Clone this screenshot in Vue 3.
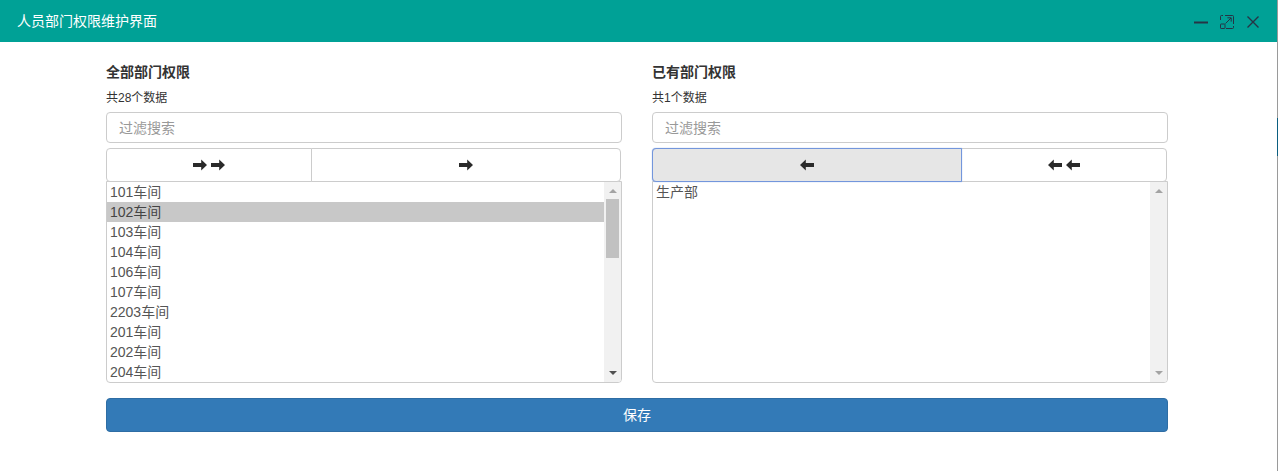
<script setup>
const panels = [
  {
    title: '全部部门权限',
    count: '共28个数据',
    items: ['101车间', '102车间', '103车间', '104车间', '106车间', '107车间', '2203车间', '201车间', '202车间', '204车间'],
    selected: '102车间',
    thumb: true,
    buttons: [
      { dir: 'right', n: 2 },
      { dir: 'right', n: 1 }
    ]
  },
  {
    title: '已有部门权限',
    count: '共1个数据',
    items: ['生产部'],
    selected: '',
    thumb: false,
    buttons: [
      { dir: 'left', n: 1, active: true },
      { dir: 'left', n: 2 }
    ]
  }
]
</script>

<template>
  <div class="page">
    <header class="bar">
      <span class="bar-title">人员部门权限维护界面</span>
      <div class="bar-icons">
        <svg width="16" height="16" viewBox="0 0 16 16"><path d="M1 8.5h14" stroke="#263445" stroke-width="2" fill="none" /></svg>
        <svg width="16" height="16" viewBox="0 0 16 16" fill="none" stroke="#263445" stroke-width="1"><path d="M6 1.5h7.5a1 1 0 0 1 1 1V10M1.5 6V2.5a1 1 0 0 1 1-1H4M14.5 12v1.5a1 1 0 0 1-1 1H7" /><rect x="1.5" y="10" width="4.5" height="4.5" rx=".6" /><path d="M6.5 9.5 12 4M8.4 3.8H12.2V7.6" /></svg>
        <svg width="16" height="16" viewBox="0 0 16 16"><path d="M2.5 2.5l11 11M13.5 2.5l-11 11" stroke="#263445" stroke-width="1.4" fill="none" /></svg>
      </div>
    </header>
    <main class="content">
      <div class="columns">
        <section v-for="p in panels" :key="p.title" class="panel">
          <h4 class="panel-title">{{ p.title }}</h4>
          <div class="panel-count">{{ p.count }}</div>
          <input class="filter" type="text" placeholder="过滤搜索" />
          <div class="btn-row">
            <button v-for="(b, i) in p.buttons" :key="i" class="move" :class="{ active: b.active }" type="button">
              <svg v-for="k in b.n" :key="k" class="arrow" :class="b.dir" width="14" height="12" viewBox="0 0 14 12"><path d="M0 4.1H8.2V0.6L14 6 8.2 11.4V7.9H0Z" fill="#2a2a2a" /></svg>
            </button>
          </div>
          <div class="list">
            <ul class="rows">
              <li v-for="it in p.items" :key="it" class="row" :class="{ selected: it === p.selected }">{{ it }}</li>
            </ul>
            <div class="scroll">
              <span class="tri up"></span>
              <div class="track"><div v-if="p.thumb" class="thumb"></div></div>
              <span class="tri down" :class="{ dim: !p.thumb }"></span>
            </div>
          </div>
        </section>
      </div>
      <button class="save" type="button">保存</button>
    </main>
    <div class="edge"><div class="edge-mark"></div></div>
  </div>
</template>

<style scoped>
.page {
  position: relative;
  width: 1278px;
  height: 471px;
  overflow: hidden;
  background: #fff;
  color: #333;
  font-family: "Liberation Sans", "Noto Sans CJK SC", sans-serif;
  font-size: 14px;
}
.edge {
  position: absolute;
  top: 0;
  right: 0;
  width: 1px;
  height: 471px;
  background: #9a9a9a;
}
.edge-mark {
  height: 38px;
  margin-top: 118px;
  background: #0b5f80;
}
.bar {
  height: 42px;
  background: #00a196;
  display: flex;
  align-items: center;
  justify-content: space-between;
  padding: 0 17px;
  box-sizing: border-box;
}
.bar-title {
  color: #fff;
  font-size: 14px;
  position: relative;
  top: -1px;
}
.bar-icons {
  display: flex;
  gap: 10px;
  margin-top: 1px;
}
.content {
  padding: 0 110px 0 106px;
}
.columns {
  display: flex;
  gap: 30px;
}
.panel {
  width: 516px;
}
.panel-title {
  margin: 22px 0 0;
  font-size: 14px;
  font-weight: 700;
  line-height: 16px;
  height: 16px;
}
.panel-count {
  margin-top: 10px;
  font-size: 12px;
  line-height: 17px;
  height: 17px;
}
.filter {
  display: block;
  box-sizing: border-box;
  width: 516px;
  height: 31px;
  margin-top: 5px;
  padding: 0 12px;
  border: 1px solid #ccc;
  border-radius: 4px;
  font: inherit;
  color: #555;
  outline: none;
}
.filter::placeholder {
  color: #999;
  opacity: 1;
}
.btn-row {
  display: flex;
  width: 515px;
  margin-top: 5px;
  height: 34px;
}
.move {
  flex: 1 1 0;
  display: flex;
  align-items: center;
  justify-content: center;
  gap: 4px;
  padding: 0;
  background: #fff;
  border: 1px solid #ccc;
  font: inherit;
}
.move:first-child {
  flex: 0 0 206px;
  border-radius: 4px 0 0 4px;
}
.move:last-child {
  margin-left: -1px;
  border-radius: 0 4px 4px 0;
}
.panel:last-child .move:first-child {
  flex: 0 0 310px;
}
.move.active {
  position: relative;
  z-index: 1;
  background: #e6e6e6;
  border-color: #7396dc;
  box-shadow: 0 0 1px #7396dc;
}
.arrow.left {
  transform: scaleX(-1);
}
.list {
  display: flex;
  box-sizing: border-box;
  width: 516px;
  height: 202px;
  margin-top: -1px;
  border: 1px solid #ccc;
  border-radius: 0 0 4px 4px;
  overflow: hidden;
}
.rows {
  flex: 1;
  margin: 0;
  padding: 0;
  list-style: none;
  overflow: hidden;
}
.row {
  height: 20px;
  line-height: 20px;
  padding-left: 3px;
  white-space: nowrap;
  color: #555;
}
.row.selected {
  background: #c8c8c8;
  color: #444;
}
.scroll {
  flex: 0 0 17px;
  background: #f1f1f1;
  display: flex;
  flex-direction: column;
  align-items: center;
}
.tri {
  width: 0;
  height: 0;
  box-sizing: border-box;
}
.tri.up {
  margin-top: 7px;
  border-left: 4px solid transparent;
  border-right: 4px solid transparent;
  border-bottom: 4px solid #a3a3a3;
}
.tri.down {
  margin-bottom: 7px;
  border-left: 4px solid transparent;
  border-right: 4px solid transparent;
  border-top: 4px solid #505050;
}
.tri.down.dim {
  border-top-color: #a3a3a3;
}
.track {
  flex: 1;
  width: 13px;
  padding-top: 6px;
}
.thumb {
  height: 59px;
  background: #c1c1c1;
}
.save {
  display: block;
  box-sizing: border-box;
  width: 1062px;
  height: 34px;
  margin-top: 15px;
  padding: 0 0 2px;
  background: #337ab7;
  border: 1px solid #2e6da4;
  border-radius: 4px;
  color: #fff;
  font: inherit;
}
</style>

<style>
html, body {
  margin: 0;
  background: #fff;
}
</style>
